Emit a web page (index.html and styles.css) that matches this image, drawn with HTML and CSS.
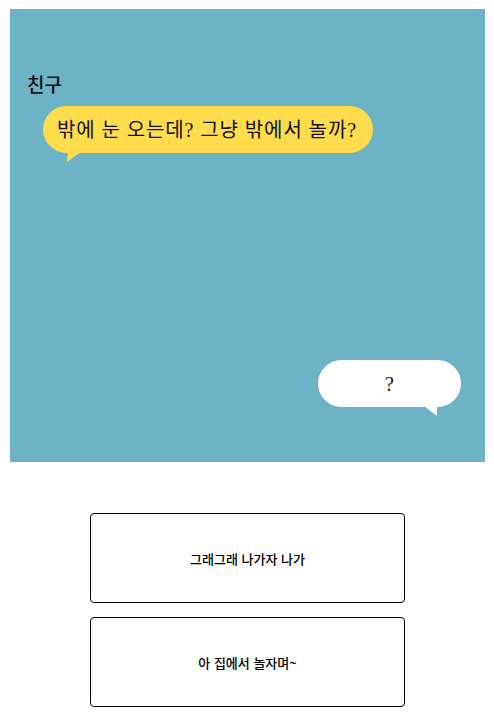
FILE: index.html
```html
<!DOCTYPE html>
<html lang="ko">

<head>
    <meta charset="UTF-8">
    <title>눈 오는 날</title>
    <link rel="stylesheet" href="styles.css">
</head>

<body>
    <div class="chat">
        <div class="name">친구</div>
        <div class="bubble friend">밖에 눈 오는데? 그냥 밖에서 놀까?</div>
        <div class="bubble me">?</div>
    </div>

    <div class="choices">
        <button class="choice">그래그래 나가자 나가</button>
        <button class="choice">아 집에서 놀자며~</button>
    </div>
</body>

</html>
```

FILE: styles.css
```css
body {
    margin: 0;
    padding: 9px 9px 0 10px;
    background: #fff;
    font-family: "Noto Sans CJK KR", sans-serif;
}

.chat {
    display: flex;
    flex-direction: column;
    align-items: flex-start;
    height: 453px;
    padding: 61px 24px 0 17px;
    box-sizing: border-box;
    background: #6db3c6;
}

.name {
    font-size: 19px;
    font-weight: 500;
    line-height: 27px;
    color: #111;
}

.bubble {
    position: relative;
    height: 47px;
    line-height: 49px;
    border-radius: 24px;
    font-family: "Liberation Serif", "Noto Sans CJK KR", serif;
    font-size: 20px;
    color: #111;
}

/* little tail under each bubble */
.bubble::after {
    content: "";
    position: absolute;
    top: 46px;
    width: 14px;
    height: 10px;
}

.friend {
    margin: 9px 0 0 16px;
    padding: 0 16px 0 14px;
    letter-spacing: 0.9px;
    background: #ffdc4c;
}

.friend::after {
    left: 24px;
    background: #ffdc4c;
    clip-path: polygon(1px 0, 14px 0, 0 100%);
}

.me {
    align-self: flex-end;
    width: 143px;
    margin-top: 207px;
    text-align: center;
    background: #fff;
}

.me::after {
    left: 106px;
    background: #fff;
    clip-path: polygon(0 0, 13px 0, 13px 100%);
}

.choices {
    display: flex;
    flex-direction: column;
    align-items: center;
    gap: 14px;
    margin-top: 51px;
}

.choice {
    width: 315px;
    height: 90px;
    background: #fff;
    border: 1px solid #000;
    border-radius: 4px;
    font-family: "Noto Sans CJK KR", sans-serif;
    font-size: 13px;
    font-weight: 500;
    color: #000;
}
```
